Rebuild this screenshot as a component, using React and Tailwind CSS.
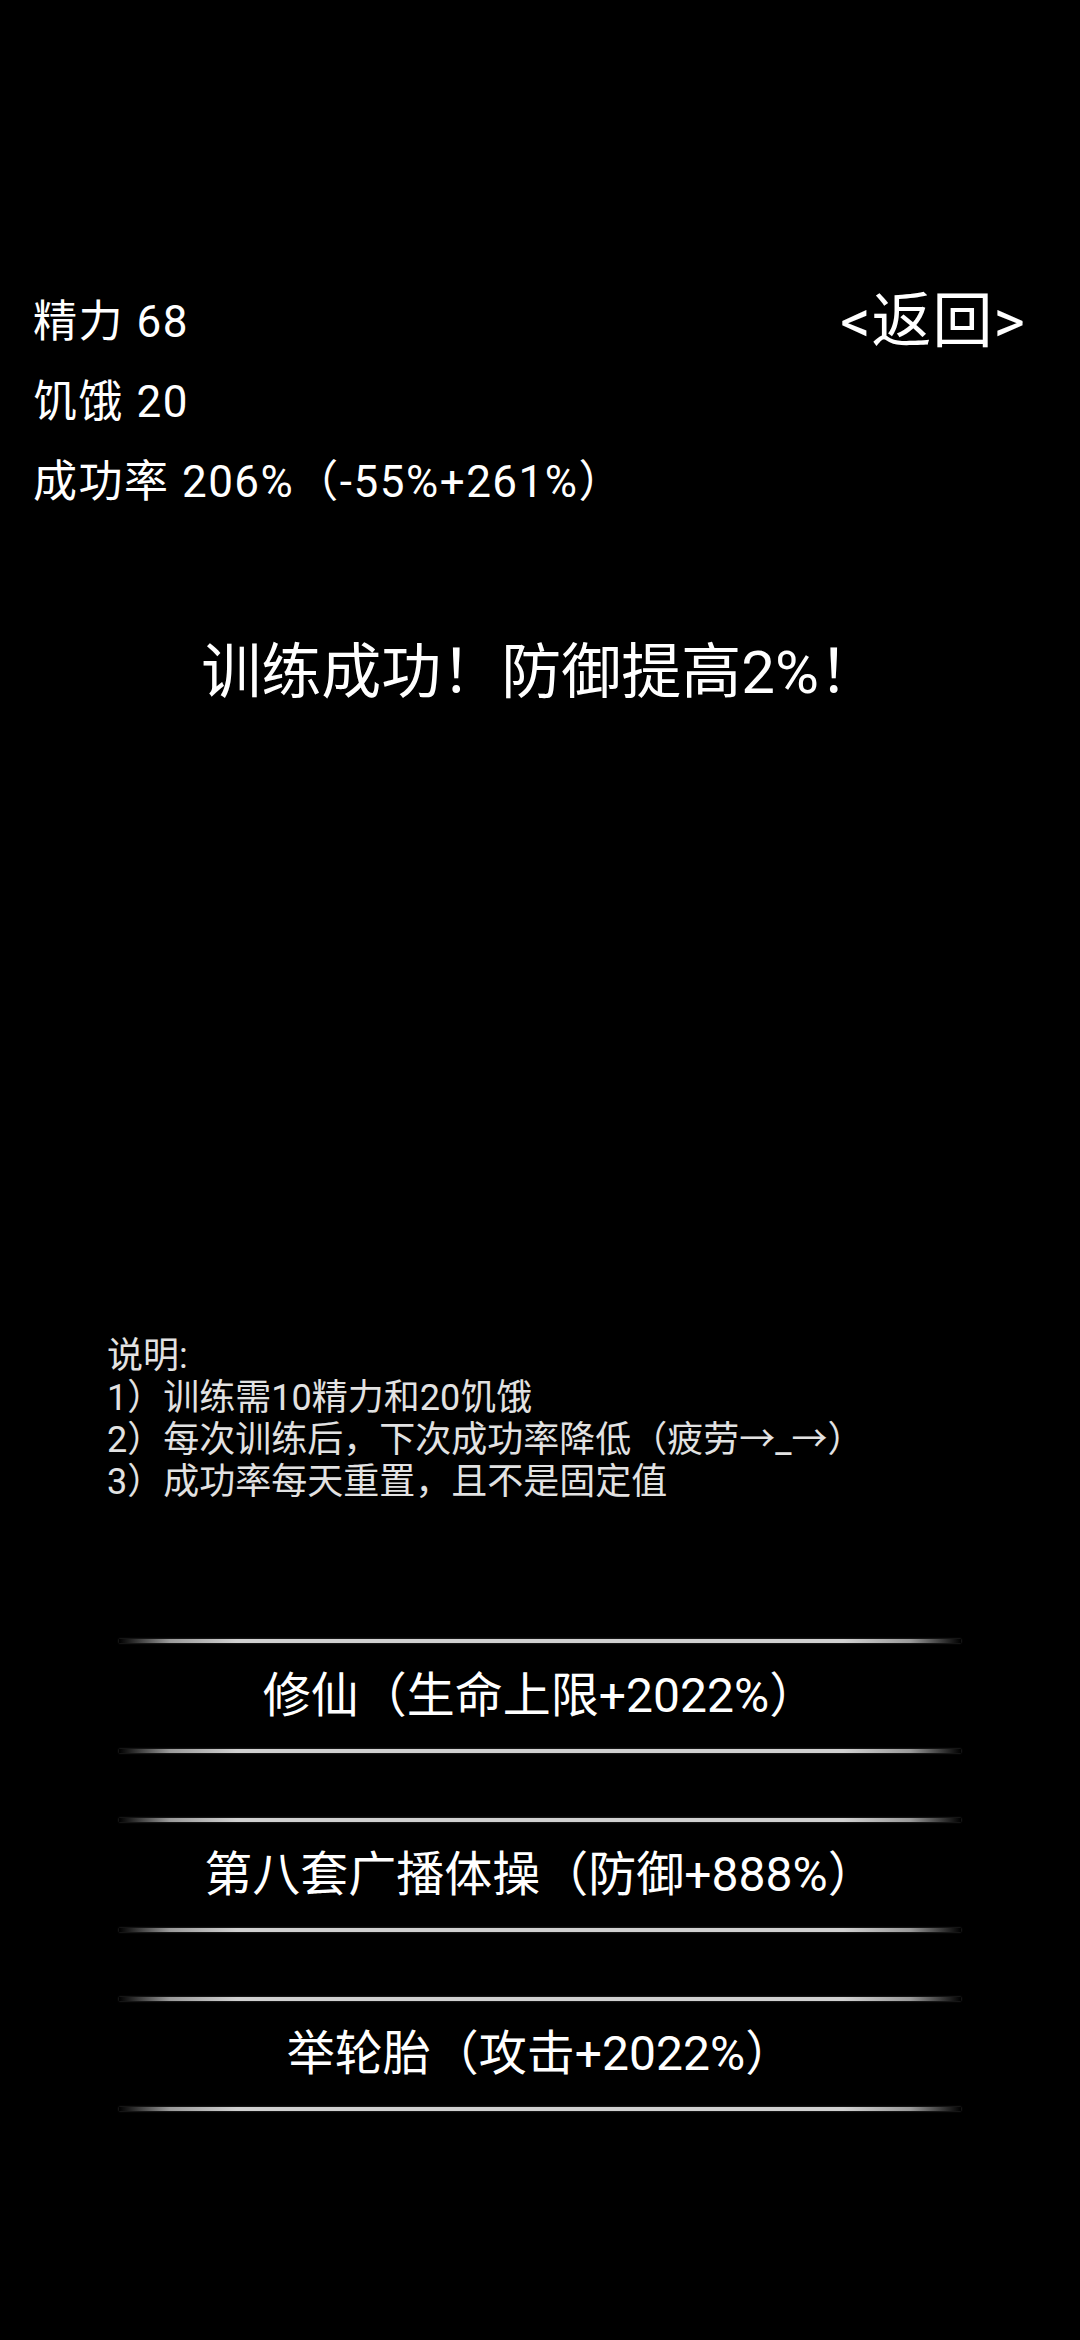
import React from "react";

const FONT = { fontFamily: 'Roboto, "Noto Sans CJK SC", sans-serif' };

function Line() {
  return (
    <div className="h-[4px] w-full bg-[linear-gradient(to_right,transparent_0%,#9a9a9a_6%,#d0d0d0_14%,#d0d0d0_86%,#9a9a9a_94%,transparent_100%)] shadow-[0_0_2px_rgba(200,200,200,0.4)]" />
  );
}

function TrainButton({ label }) {
  return (
    <div className="mx-auto flex w-[842px] flex-col">
      <Line />
      <div className="flex h-[106px] items-center justify-center text-[48px] leading-none text-white">
        {label}
      </div>
      <Line />
    </div>
  );
}

export default function App() {
  return (
    <div className="min-h-[2340px] w-[1080px] bg-black text-white" style={FONT}>
      <div className="pt-[282px]">
        <div className="flex items-center justify-between pl-[33px] pr-[54px] leading-[80px]">
          <span className="text-[44px] tracking-[1.5px]">精力 68</span>
          <span className="text-[60px] leading-[80px] tracking-[1px]">&lt;返回&gt;</span>
        </div>
        <div className="pl-[33px] text-[44px] leading-[80px] tracking-[1.5px]">饥饿 20</div>
        <div className="pl-[33px] text-[44px] leading-[80px] tracking-[1.5px]">成功率 206%（-55%+261%）</div>
      </div>

      <div className="mt-[121px] text-center text-[60px] leading-[60px]">训练成功！防御提高2%！</div>

      <div className="mt-[632px] pl-[107px] text-[36px] leading-[42px] text-[#e2e2e2]">
        <div>说明:</div>
        <div>1）训练需10精力和20饥饿</div>
        <div>2）每次训练后，下次成功率降低（疲劳→_→）</div>
        <div>3）成功率每天重置，且不是固定值</div>
      </div>

      <div className="mt-[136px] flex flex-col gap-[65px]">
        <TrainButton label="修仙（生命上限+2022%）" />
        <TrainButton label="第八套广播体操（防御+888%）" />
        <TrainButton label="举轮胎（攻击+2022%）" />
      </div>
    </div>
  );
}
